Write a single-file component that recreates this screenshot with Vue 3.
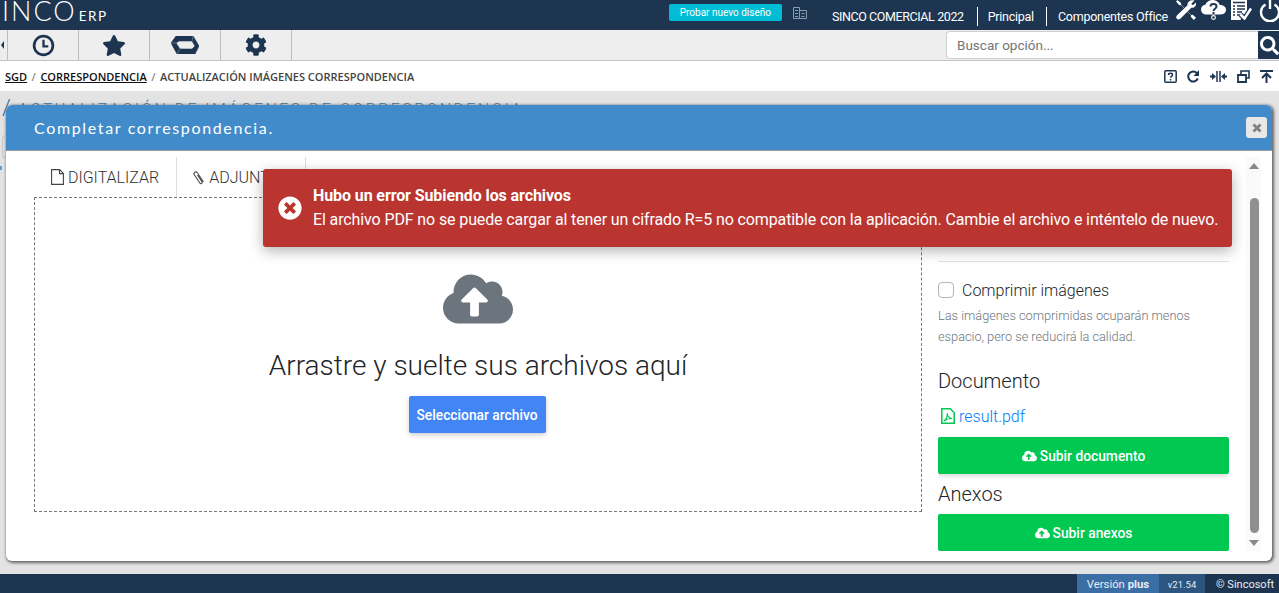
<template>
  <div class="page">
    <header class="topbar">
      <div class="logo">
        <span class="logo-main">INCO</span>
        <span class="logo-sub">ERP</span>
      </div>
      <div class="top-right">
        <button class="try-btn">Probar nuevo diseño</button>
        <svg class="building" viewBox="0 0 14 12" width="14" height="12">
          <path d="M.5.5h6v11h-6zM6.500 3.500h7v8h-7zM2 3.500h3M2 6.500h3M2 9.500h3M8.500 6.500h3M8.500 9.500h3" fill="none" stroke="#8d9bab" stroke-width="1" />
        </svg>
        <span class="company">SINCO COMERCIAL 2022</span>
        <span class="top-link">Principal</span>
        <span class="top-link office">Componentes Office</span>
        <div class="top-icons">
          <svg viewBox="0 0 20 20" width="20" height="20">
            <path d="M1.500 0L5 3l.3 2 10 10 1.500-.3 3.200 3-2.200 2.300-3-3.200.3-1.500-10-10-2-.3L0 1.500z" fill="#fff" />
            <path d="M18.500.5l-3 3 .3 1.300 1.300.3 3-2.800c.6 3-1.700 6-4.800 5.500L4.500 18.500c-1 1.200-3 1.200-3.700.3-.9-1-.7-2.600.3-3.500L11.500 5.200C11 2 14.800-.9 18.500.5z" fill="#fff" />
          </svg>
          <svg viewBox="0 0 25 20" width="25" height="20">
            <path d="M5.500 14.500C2.500 14.500 0 12.500 0 9.500c0-2.500 1.800-4.500 4.300-4.800C5.500 1.800 8.500 0 11.500 0c3.500 0 6.500 2.300 7.300 5 3.500 0 6.200 1.800 6.200 4.800s-2.300 4.700-5.500 4.700z" fill="#fff" />
            <path d="M9.500 6.500c0-3.300 6-3.300 6 0 0 2.300-3 2.300-3 4.500" fill="none" stroke="#1d3550" stroke-width="2" />
            <circle cx="12.500" cy="17.500" r="1.900" fill="none" stroke="#fff" stroke-width="1.100" />
            <rect x="11.500" y="12" width="2" height="2" fill="#1d3550" />
          </svg>
          <svg viewBox="0 0 21 20" width="21" height="20">
            <path d="M0 0h16v11l-5 6-1.500 3H0z" fill="#fff" />
            <path d="M2 2.500h12M2 6h2M6 6h8M2 9h2M6 9h8M2 12h2M6 12h5M2 15h2M6 15h3" stroke="#1d3550" stroke-width="1.400" />
            <path d="M9.500 14.500l4 4L20 8.500" fill="none" stroke="#1d3550" stroke-width="5" />
            <path d="M9.500 14.500l4 4L20 8.500" fill="none" stroke="#fff" stroke-width="2.500" />
          </svg>
          <svg viewBox="0 0 22 22" width="22" height="22">
            <path d="M6.500 4.500a9 9 0 1 0 9 0" fill="none" stroke="#fff" stroke-width="2.400" />
            <path d="M11 0v9" stroke="#fff" stroke-width="2.400" />
          </svg>
        </div>
      </div>
    </header>

    <nav class="toolbar">
      <div class="tool-stub"><span class="stub-arrow"></span></div>
      <div class="tool">
        <svg viewBox="0 0 24 24" width="23" height="23">
          <circle cx="12" cy="12" r="9.800" fill="none" stroke="#1d3550" stroke-width="2.800" />
          <path d="M12 6v7h5" fill="none" stroke="#1d3550" stroke-width="2.400" />
        </svg>
      </div>
      <div class="tool">
        <svg viewBox="0 0 576 512" width="24" height="21">
          <path d="M259.3 17.8L194 150.2 47.9 171.5c-26.2 3.8-36.7 36.1-17.7 54.6l105.7 103-25 145.500c-4.500 26.300 23.200 46 46.400 33.700L288 439.600l130.700 68.700c23.200 12.200 50.900-7.400 46.400-33.700l-25-145.500 105.700-103c19-18.500 8.500-50.800-17.700-54.600L382 150.200 316.700 17.800c-11.700-23.600-45.600-23.900-57.400 0z" fill="#1d3550" />
        </svg>
      </div>
      <div class="tool">
        <svg viewBox="0 0 28 18" width="28" height="18">
          <path d="M5 0h17l6 10-4 8H6L0 7zM8 5L5 7l4 6h12l3-3-3-5z" fill="#1d3550" fill-rule="evenodd" stroke="#1d3550" stroke-width=".6" stroke-linejoin="round" />
          <path d="M0 7h5M22 0l-1 5M6 18l3-5" stroke="#6b8098" stroke-width=".8" />
        </svg>
      </div>
      <div class="tool">
        <svg viewBox="0 0 512 512" width="22" height="22">
          <path d="M487.400 315.700l-42.600-24.600c4.300-23.200 4.300-47 0-70.200l42.600-24.600c4.900-2.800 7.100-8.600 5.500-14-11.100-35.600-30-67.800-54.700-94.600-3.800-4.100-10-5.100-14.800-2.300L380.800 110c-17.900-15.400-38.500-27.300-60.800-35.100V25.800c0-5.600-3.900-10.500-9.400-11.700-36.700-8.200-74.300-7.800-109.200 0-5.500 1.200-9.400 6.100-9.400 11.700V75c-22.200 7.900-42.800 19.800-60.800 35.100L88.700 85.500c-4.900-2.800-11-1.900-14.800 2.300-24.700 26.700-43.600 58.900-54.700 94.600-1.700 5.400.6 11.200 5.500 14L67.300 221c-4.300 23.200-4.300 47 0 70.200l-42.600 24.600c-4.900 2.800-7.100 8.600-5.500 14 11.100 35.600 30 67.800 54.700 94.600 3.800 4.100 10 5.100 14.800 2.300l42.600-24.600c17.900 15.400 38.500 27.300 60.800 35.100v49.200c0 5.600 3.900 10.500 9.400 11.700 36.700 8.200 74.300 7.800 109.200 0 5.500-1.200 9.400-6.100 9.400-11.700v-49.200c22.200-7.900 42.800-19.800 60.800-35.100l42.600 24.600c4.900 2.800 11 1.900 14.800-2.300 24.700-26.700 43.600-58.900 54.700-94.600 1.500-5.500-.7-11.300-5.600-14.100zM256 336c-44.100 0-80-35.900-80-80s35.900-80 80-80 80 35.900 80 80-35.900 80-80 80z" fill="#1d3550" />
        </svg>
      </div>
      <div class="search">
        <input class="search-input" placeholder="Buscar opción..." />
        <div class="search-btn">
          <svg viewBox="0 0 512 512" width="19" height="19">
            <path d="M505 442.700L405.300 343c-4.500-4.500-10.600-7-17-7H372c27.600-35.300 44-79.700 44-128C416 93.100 322.900 0 208 0S0 93.100 0 208s93.100 208 208 208c48.300 0 92.700-16.400 128-44v16.300c0 6.400 2.500 12.500 7 17l99.700 99.700c9.400 9.400 24.600 9.400 33.900 0l28.300-28.300c9.400-9.400 9.400-24.600.1-34zM208 336c-70.700 0-128-57.200-128-128 0-70.700 57.200-128 128-128 70.700 0 128 57.200 128 128 0 70.700-57.200 128-128 128z" fill="#fff" />
          </svg>
        </div>
      </div>
    </nav>

    <div class="crumbs">
      <a class="crumb">SGD</a>
      <span class="slash">/</span>
      <a class="crumb">CORRESPONDENCIA</a>
      <span class="slash">/</span>
      <span class="crumb-now">ACTUALIZACIÓN IMÁGENES CORRESPONDENCIA</span>
      <div class="crumb-icons">
        <svg viewBox="0 0 13 13" width="13" height="13">
          <rect x=".8" y=".8" width="11.400" height="11.400" rx="1" fill="none" stroke="#1d3550" stroke-width="1.500" />
          <path d="M4.500 5c0-2.200 4-2.200 4 0 0 1.500-2 1.300-2 2.800M6.500 9v1.500" fill="none" stroke="#1d3550" stroke-width="1.500" />
        </svg>
        <svg viewBox="0 0 13 13" width="13" height="13">
          <path d="M10.800 8.500A5 5 0 1 1 9.800 3" fill="none" stroke="#1d3550" stroke-width="2" />
          <path d="M12 0v6H6.500z" fill="#1d3550" />
        </svg>
        <svg viewBox="0 0 17 13" width="17" height="13">
          <path d="M7 1v11M10 1v11" stroke="#1d3550" stroke-width="1.500" />
          <path d="M0 6.500h3M14 6.500h3" stroke="#1d3550" stroke-width="2" />
          <path d="M6 6.500L2 3v7zM11 6.500L15 3v7z" fill="#1d3550" />
        </svg>
        <svg viewBox="0 0 13 13" width="13" height="13">
          <path d="M4 4V1h8v7H9" fill="none" stroke="#1d3550" stroke-width="1.600" />
          <path d="M1 5h8v7H1z" fill="none" stroke="#1d3550" stroke-width="1.800" />
        </svg>
        <svg viewBox="0 0 13 13" width="13" height="13">
          <path d="M0 1h13" stroke="#1d3550" stroke-width="2" />
          <path d="M6.500 13V5M2 8l4.500-4.500L11 8" fill="none" stroke="#1d3550" stroke-width="2" />
        </svg>
      </div>
    </div>

    <main class="content">
      <h2 class="bg-title"><span class="bg-slash">/</span>ACTUALIZACIÓN DE IMÁGENES DE CORRESPONDENCIA</h2>
      <div class="bg-card"></div>
      <div class="bg-dots"></div>
    </main>

    <footer class="footer">
      <span class="ver-plus">Versión <b>plus</b></span>
      <span class="ver-num">v21.54</span>
      <span class="copy">© Sincosoft</span>
    </footer>

    <section class="modal">
      <div class="modal-head">
        <span class="modal-title">Completar correspondencia.</span>
        <button class="modal-close">
          <svg viewBox="0 0 10 10" width="10" height="10">
            <path d="M1.500 1.500l7 7M8.500 1.500l-7 7" stroke="#808080" stroke-width="2.800" />
          </svg>
        </button>
      </div>
      <div class="modal-body">
        <div class="left">
          <div class="tabs">
            <div class="tab">
              <svg viewBox="0 0 13 16" width="13" height="16">
                <path d="M.6.600h8l3.800 3.800v11H.6zM8.500.6v4h4" fill="none" stroke="#444" stroke-width="1.100" />
              </svg>
              DIGITALIZAR
            </div>
            <div class="tab tab-second">
              <svg viewBox="0 0 13 15" width="13" height="15">
                <path d="M11.500 12L5.500 3C4 .7 1 2.500 2.300 4.800l5.500 8.200c1 1.400 3 .3 2.200-1.200L5.500 5" fill="none" stroke="#555" stroke-width="1.200" />
              </svg>
              ADJUNTOS
            </div>
          </div>
          <div class="dropzone">
            <svg class="cloud" viewBox="0 0 640 512" width="70" height="56">
              <path :d="cloudPath" fill="#6c757d" />
            </svg>
            <p class="drop-text">Arrastre y suelte sus archivos aquí</p>
            <button class="select-btn">Seleccionar archivo</button>
          </div>
        </div>

        <aside class="side">
          <hr class="side-line" />
          <label class="check">
            <span class="check-box"></span>
            Comprimir imágenes
          </label>
          <p class="hint">Las imágenes comprimidas ocuparán menos espacio, pero se reducirá la calidad.</p>
          <h4 class="side-title doc-title">Documento</h4>
          <div class="file">
            <svg viewBox="0 0 14 16" width="14" height="16">
              <path d="M.8.800h8.400l4 4v10.400H.8z" fill="none" stroke="#00c853" stroke-width="1.500" />
              <path d="M3 13c2-1.500 3.500-5 3.300-8C6 7.500 8 10.500 11 10.500c-2.500 0-6 .8-8 2.500z" fill="none" stroke="#00c853" stroke-width="1.100" />
            </svg>
            <a>result.pdf</a>
          </div>
          <button class="green-btn">
            <svg viewBox="0 0 640 512" width="15" height="12">
              <path :d="cloudPath" fill="#fff" />
            </svg>
            Subir documento
          </button>
          <h4 class="side-title">Anexos</h4>
          <button class="green-btn">
            <svg viewBox="0 0 640 512" width="15" height="12">
              <path :d="cloudPath" fill="#fff" />
            </svg>
            Subir anexos
          </button>
        </aside>

        <div class="scroll">
          <span class="arrow-up"></span>
          <span class="thumb"></span>
          <span class="arrow-down"></span>
        </div>
      </div>
    </section>

    <div class="toast">
      <svg class="toast-icon" viewBox="0 0 512 512" width="24" height="24">
        <path d="M256 8C119 8 8 119 8 256s111 248 248 248 248-111 248-248S393 8 256 8zm121.600 313.100c4.700 4.700 4.700 12.300 0 17L338 377.600c-4.700 4.700-12.300 4.700-17 0L256 312l-65.100 65.600c-4.700 4.700-12.300 4.700-17 0L134.400 338c-4.700-4.700-4.700-12.300 0-17l65.600-65-65.600-65.100c-4.700-4.700-4.700-12.300 0-17l39.600-39.600c4.700-4.700 12.300-4.700 17 0l65 65.700 65.100-65.600c4.700-4.700 12.300-4.700 17 0l39.600 39.600c4.700 4.700 4.700 12.300 0 17L312 256l65.600 65.100z" fill="#fff" />
      </svg>
      <div>
        <div class="toast-title">Hubo un error Subiendo los archivos</div>
        <div class="toast-text">El archivo PDF no se puede cargar al tener un cifrado R=5 no compatible con la aplicación. Cambie el archivo e inténtelo de nuevo.</div>
      </div>
    </div>
  </div>
</template>

<script setup>
const cloudPath = 'M537.600 226.600c4.100-10.700 6.400-22.400 6.400-34.600 0-53-43-96-96-96-19.700 0-38.100 6-53.300 16.200C367 64.200 315.300 32 256 32c-88.400 0-160 71.600-160 160 0 2.700.1 5.400.2 8.100C40.200 219.800 0 273.200 0 336c0 79.500 64.500 144 144 144h368c70.700 0 128-57.300 128-128 0-61.900-44-113.600-102.400-125.400zM393.400 288H328v112c0 8.800-7.200 16-16 16h-48c-8.800 0-16-7.200-16-16V288h-65.400c-14.300 0-21.400-17.200-11.300-27.300l105.400-105.400c6.200-6.200 16.400-6.200 22.600 0l105.400 105.400c10.100 10.100 2.900 27.300-11.300 27.300z'
</script>

<style>
html, body {
  margin: 0;
  overflow: hidden;
}
</style>

<style scoped>
.page {
  position: relative;
  width: 1279px;
  height: 593px;
  display: flex;
  flex-direction: column;
  overflow: hidden;
  font-family: Roboto, "Liberation Sans", sans-serif;
  background: #e3e3e3;
}

.topbar {
  height: 30px;
  flex: none;
  display: flex;
  justify-content: space-between;
  background: #1d3550;
  color: #fff;
  overflow: hidden;
}

.logo {
  display: flex;
  align-items: baseline;
  padding-left: 2px;
  margin-top: -2px;
  font-family: Lato, sans-serif;
  line-height: 26px;
}

.logo-main {
  font-size: 27px;
  font-weight: 300;
  letter-spacing: 2px;
}

.logo-sub {
  font-size: 13.500px;
  font-weight: 400;
  letter-spacing: 1.500px;
  margin-left: 2px;
}

.top-right {
  display: flex;
  align-items: center;
  padding-top: 2px;
  margin-right: -2px;
  font-size: 12.500px;
}

.try-btn {
  width: 113px;
  height: 17px;
  padding: 0;
  margin: -7px 0 0;
  border: 0;
  border-radius: 2px;
  background: #00bcd4;
  color: #fff;
  font: 10px Roboto, sans-serif;
}

.building {
  margin: -7px 0 0 11px;
}

.company {
  margin-left: 25px;
  letter-spacing: -.4px;
}

.top-link {
  margin-left: 13px;
  padding-left: 10px;
  border-left: 1px solid #fff;
  line-height: 19px;
  letter-spacing: -.25px;
}

.office {
  margin-left: 12px;
  padding-left: 11px;
}

.top-icons {
  display: flex;
  margin: -10px 0 0 8px;
}

.top-icons svg + svg {
  margin-left: 5px;
}

.top-icons svg:last-child {
  margin-left: 7px;
}

.toolbar {
  height: 30px;
  flex: none;
  display: flex;
  background: #eee;
  border-bottom: 1px solid #c4c4c4;
}

.tool-stub {
  width: 7px;
  display: flex;
  align-items: center;
  border-right: 1px solid #bdbdbd;
}

.stub-arrow {
  width: 0;
  height: 0;
  border: 4px solid transparent;
  border-right: 3px solid #1d3550;
  margin-left: -3px;
}

.tool {
  width: 70px;
  display: flex;
  align-items: center;
  justify-content: center;
  border-right: 1px solid #bdbdbd;
}

.search {
  margin-left: auto;
  width: 333px;
  display: flex;
  padding-top: 1px;
  height: 28px;
}

.search-input {
  flex: 1;
  min-width: 0;
  box-sizing: border-box;
  padding: 0 10px;
  border: 1px solid #d0d0d0;
  border-right: 0;
  border-radius: 4px 0 0 4px;
  background: #fff;
  font: 13.500px Roboto, sans-serif;
  outline: none;
}

.search-input::placeholder {
  color: #757575;
}

.search-btn {
  width: 21px;
  background: #1d3550;
  display: flex;
  align-items: center;
  padding-left: 2px;
  box-sizing: border-box;
  overflow: hidden;
}

.search-btn svg {
  flex: none;
}

.crumbs {
  height: 30px;
  flex: none;
  display: flex;
  align-items: center;
  padding: 0 6px 0 5px;
  background: #fff;
  font-family: "Open Sans", sans-serif;
  font-size: 11px;
  font-weight: 600;
  color: #444;
}

.crumb {
  color: #111;
  text-decoration: underline;
}

.slash {
  margin: 0 4.500px;
  color: #888;
}

.crumb-icons {
  margin-left: auto;
  display: flex;
  align-items: center;
  gap: 10px;
}

.content {
  flex: 1;
  overflow: hidden;
}

.bg-title {
  margin: 7px 0 0 2px;
  font: 300 16px/20px Roboto, sans-serif;
  letter-spacing: 2.400px;
  color: #44708f;
  white-space: nowrap;
}

.bg-slash {
  display: inline-block;
  width: 16px;
  font-size: 22px;
  letter-spacing: 0;
  color: #2e6da4;
}

.bg-card {
  width: 20px;
  height: 24px;
  margin: 15px 0 0 2px;
  box-sizing: border-box;
  border: 1px solid #c8c8c8;
  border-radius: 4px;
}

.bg-dots {
  width: 6px;
  height: 4px;
  margin: 7px 0 0;
  border-left: 2px dotted #6a9bc7;
}

.footer {
  height: 19px;
  flex: none;
  display: flex;
  justify-content: flex-end;
  align-items: stretch;
  background: #1d3550;
  color: #e8edf2;
  font-size: 11.300px;
  line-height: 21px;
}

.ver-plus {
  width: 82px;
  text-align: center;
  background: #3a6ea5;
}

.ver-num {
  width: 46px;
  text-align: center;
  background: #2c5580;
  font-size: 9.500px;
}

.copy {
  width: 63px;
  padding-left: 11px;
  font-size: 11px;
}

.modal {
  position: absolute;
  left: 6px;
  top: 105px;
  width: 1266px;
  height: 456px;
  display: flex;
  flex-direction: column;
  background: #fff;
  border-radius: 6px;
  box-shadow: 1px 1px 3px 1px #666;
  overflow: hidden;
}

.modal-head {
  height: 46px;
  flex: none;
  display: flex;
  align-items: center;
  justify-content: space-between;
  box-sizing: border-box;
  padding: 0 5px 0 28px;
  background: #428bca;
  border-bottom: 1px solid #9a9a9a;
}

.modal-title {
  font-family: Lato, sans-serif;
  font-size: 16px;
  letter-spacing: 1.650px;
  color: #fff;
}

.modal-close {
  width: 21px;
  height: 21px;
  padding: 0;
  display: flex;
  align-items: center;
  justify-content: center;
  border: 0;
  border-radius: 3px;
  background: #e8e8e8;
}

.modal-body {
  flex: 1;
  display: flex;
  min-height: 0;
  padding: 6px 11px 10px 28px;
}

.left {
  width: 888px;
  flex: none;
}

.tabs {
  display: flex;
  height: 40px;
}

.tab {
  width: 143px;
  display: flex;
  align-items: center;
  justify-content: center;
  gap: 4px;
  box-sizing: border-box;
  font-weight: 300;
  font-size: 16px;
  color: #333;
  border-right: 1px solid #dedede;
}

.tab-second {
  width: 129px;
}

.dropzone {
  box-sizing: border-box;
  height: 315px;
  display: flex;
  flex-direction: column;
  align-items: center;
  border: 1px dashed #777;
}

.cloud {
  margin-top: 73px;
}

.drop-text {
  margin: 23px 0 0;
  font-weight: 300;
  font-size: 28px;
  line-height: 32px;
  color: #212529;
}

.select-btn {
  margin: 14px 2px 0 0;
  width: 137px;
  height: 37px;
  padding: 0;
  border: 0;
  border-radius: 2px;
  background: #4285f4;
  color: #fff;
  font: 500 13.800px Roboto, sans-serif;
  box-shadow: 0 2px 5px rgba(0, 0, 0, .2);
}

.side {
  width: 291px;
  flex: none;
  margin-left: 16px;
  height: 394px;
  padding-top: 104px;
  box-sizing: border-box;
  overflow: hidden;
}

.side-line {
  margin: 0;
  border: 0;
  border-top: 1px solid #e2e2e2;
}

.check {
  display: flex;
  align-items: center;
  gap: 8px;
  margin-top: 19px;
  height: 18px;
  font-weight: 300;
  font-size: 16px;
  color: #212529;
}

.check-box {
  box-sizing: border-box;
  width: 16px;
  height: 16px;
  border: 1px solid #adb5bd;
  border-radius: 4px;
  background: #fff;
}

.hint {
  margin: 6px 0 0;
  font-weight: 300;
  font-size: 12.750px;
  line-height: 21px;
  color: #6c757d;
}

.side-title {
  margin: 0;
  font-weight: 300;
  font-size: 20px;
  line-height: 24px;
  color: #212529;
}

.doc-title {
  margin-top: 22px;
}

.file {
  display: flex;
  align-items: center;
  gap: 4px;
  margin: 11px 0 9px 3px;
  height: 24px;
  font-weight: 300;
  font-size: 16px;
  color: #007bff;
}

.green-btn {
  display: flex;
  align-items: center;
  justify-content: center;
  gap: 3px;
  width: 100%;
  height: 37px;
  padding: 0;
  border: 0;
  border-radius: 2px;
  background: #00c851;
  color: #fff;
  font: 500 13.800px Roboto, sans-serif;
  box-shadow: 0 2px 5px rgba(0, 0, 0, .16);
}

.side-title + .green-btn {
  margin-top: 8px;
}

.green-btn + .side-title {
  margin-top: 8px;
}

.scroll {
  position: relative;
  flex: none;
  margin-left: 17px;
  width: 15px;
  background: #fafafa;
  height: 394px;
}

.thumb {
  position: absolute;
  left: 4px;
  top: 41px;
  width: 9px;
  height: 335px;
  border-radius: 5px;
  background: #8f8f8f;
}

.arrow-up,
.arrow-down {
  position: absolute;
  left: 3px;
  width: 0;
  height: 0;
  border-left: 5px solid transparent;
  border-right: 5px solid transparent;
}

.arrow-up {
  top: 6px;
  border-bottom: 6px solid #888;
}

.arrow-down {
  bottom: 5px;
  border-top: 6px solid #888;
}

.toast {
  position: absolute;
  left: 263px;
  top: 169px;
  width: 969px;
  height: 78px;
  display: flex;
  align-items: center;
  gap: 11px;
  box-sizing: border-box;
  padding: 0 0 0 15px;
  border-radius: 3px;
  background: #bb3530;
  color: #fff;
  box-shadow: 0 4px 14px rgba(0, 0, 0, .3);
}

.toast-title {
  font-weight: 700;
  font-size: 16px;
  line-height: 24px;
  letter-spacing: -.1px;
}

.toast-text {
  font-size: 16px;
  line-height: 24px;
  letter-spacing: -.12px;
  white-space: nowrap;
}
</style>
